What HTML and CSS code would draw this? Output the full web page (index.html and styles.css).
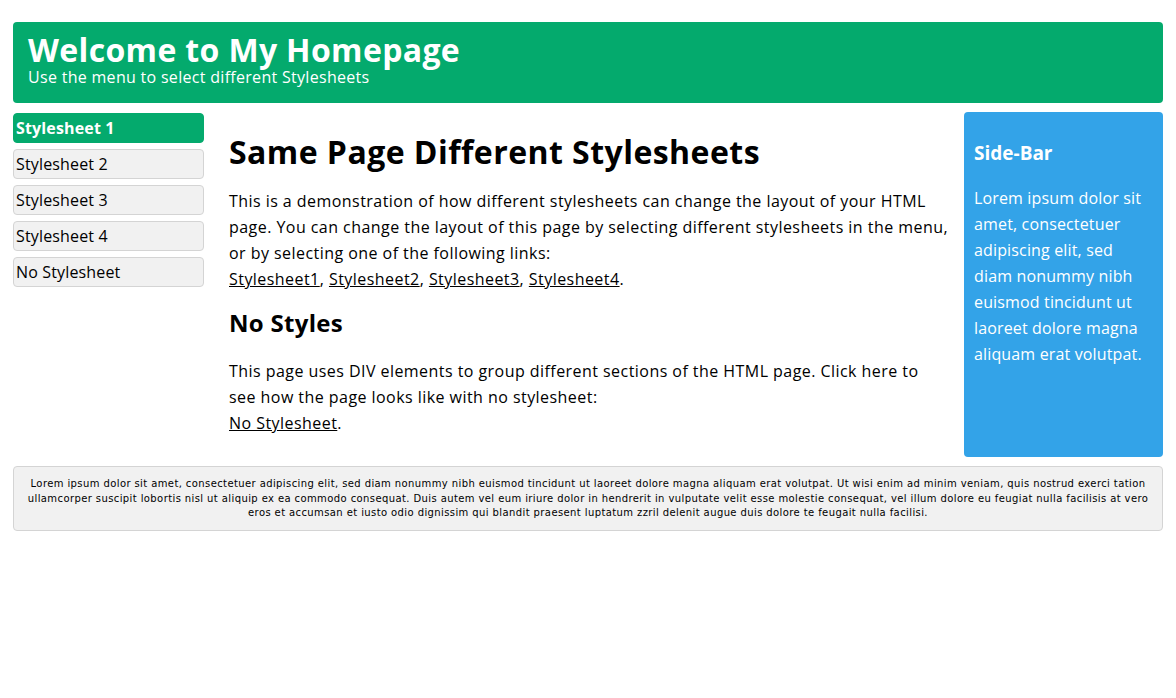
FILE: index.html
```html
<!DOCTYPE html>
<html lang="en">
<head>
<meta charset="utf-8">
<title>Same Page Different Stylesheets</title>
<link rel="stylesheet" href="styles.css">
</head>
<body>
<div class="page">
  <div class="header">
    <h1>Welcome to My Homepage</h1>
    <p>Use the menu to select different Stylesheets</p>
  </div>
  <div class="row">
    <div class="menu">
      <div class="menuitem active">Stylesheet 1</div>
      <div class="menuitem">Stylesheet 2</div>
      <div class="menuitem">Stylesheet 3</div>
      <div class="menuitem">Stylesheet 4</div>
      <div class="menuitem">No Stylesheet</div>
    </div>
    <div class="main">
      <h1>Same Page Different Stylesheets</h1>
      <p>This is a demonstration of how different stylesheets can change the layout of your HTML page. You can change the layout of this page by selecting different stylesheets in the menu, or by selecting one of the following links:<br>
      <a href="#">Stylesheet1</a>, <a href="#">Stylesheet2</a>, <a href="#">Stylesheet3</a>, <a href="#">Stylesheet4</a>.</p>
      <h2>No Styles</h2>
      <p>This page uses DIV elements to group different sections of the HTML page. Click here to see how the page looks like with no stylesheet:<br>
      <a href="#">No Stylesheet</a>.</p>
    </div>
    <div class="sidebar">
      <h3>Side-Bar</h3>
      <p>Lorem ipsum dolor sit amet, consectetuer adipiscing elit, sed diam nonummy nibh euismod tincidunt ut laoreet dolore magna aliquam erat volutpat.</p>
    </div>
  </div>
  <div class="footer">
    <p>Lorem ipsum dolor sit amet, consectetuer adipiscing elit, sed diam nonummy nibh euismod tincidunt ut laoreet dolore magna aliquam erat volutpat. Ut wisi enim ad minim veniam, quis nostrud exerci tation ullamcorper suscipit lobortis nisl ut aliquip ex ea commodo consequat. Duis autem vel eum iriure dolor in hendrerit in vulputate velit esse molestie consequat, vel illum dolore eu feugiat nulla facilisis at vero eros et accumsan et iusto odio dignissim qui blandit praesent luptatum zzril delenit augue duis dolore te feugait nulla facilisi.</p>
  </div>
</div>
</body>
</html>
```

FILE: styles.css
```css
html, body {
  margin: 0;
  padding: 0;
  background: #ffffff;
}
body {
  font-family: "Open Sans", "DejaVu Sans", sans-serif;
  color: #000000;
}
.page {
  padding: 22px 13px 0 13px;
}
.header {
  background-color: #04aa6d;
  color: #ffffff;
  border-radius: 4px;
  padding: 10px 15px 13px 15px;
  height: 58px;
}
.header h1 {
  margin: 0;
  font-size: 32px;
  line-height: 36px;
  font-weight: bold;
  letter-spacing: 0.35px;
}
.header p {
  margin: 0;
  font-size: 16px;
  line-height: 18px;
  letter-spacing: 0.3px;
}
.row {
  display: flex;
  align-items: flex-start;
  margin-top: 9px;
}
.menu {
  width: 191px;
  flex: none;
  padding-top: 1px;
}
.menuitem {
  box-sizing: border-box;
  height: 30px;
  margin-bottom: 6px;
  padding: 0 2px;
  background-color: #f1f1f1;
  border: 1px solid #d4d4d4;
  border-radius: 4px;
  font-size: 16px;
  line-height: 28px;
  letter-spacing: 0.15px;
  color: #000000;
}
.menuitem.active {
  background-color: #04aa6d;
  border-color: #04aa6d;
  color: #ffffff;
  font-weight: bold;
}
.main {
  flex: 1;
  min-width: 0;
  padding: 0 15.5px 0 25px;
  font-size: 16px;
}
.main h1 {
  font-size: 32px;
  line-height: 40px;
  margin: 20px 0 16px 0;
  letter-spacing: 0.45px;
}
.main h2 {
  font-size: 24px;
  line-height: 30px;
  margin: 16px 0 20px 0;
  letter-spacing: 0.3px;
}
.main p {
  margin: 0;
  line-height: 26px;
  letter-spacing: 0.45px;
}
.main a {
  color: #000000;
  text-decoration: underline;
}
.sidebar {
  width: 199px;
  flex: none;
  box-sizing: border-box;
  height: 345px;
  background-color: #33a3e8;
  color: #ffffff;
  border-radius: 4px;
  padding: 0 10px;
}
.sidebar h3 {
  font-size: 19px;
  line-height: 24px;
  margin: 29px 0 20px 0;
}
.sidebar p {
  margin: 0;
  font-size: 16px;
  line-height: 26px;
  letter-spacing: 0.15px;
}
.footer {
  margin-top: 9px;
  background-color: #f1f1f1;
  border: 1px solid #d4d4d4;
  border-radius: 4px;
  padding: 10px 5px 9px 5px;
  text-align: center;
  font-family: "DejaVu Sans", sans-serif;
  font-size: 10px;
  letter-spacing: 0.4px;
}
.footer p {
  margin: 0;
  line-height: 14.5px;
}
```
